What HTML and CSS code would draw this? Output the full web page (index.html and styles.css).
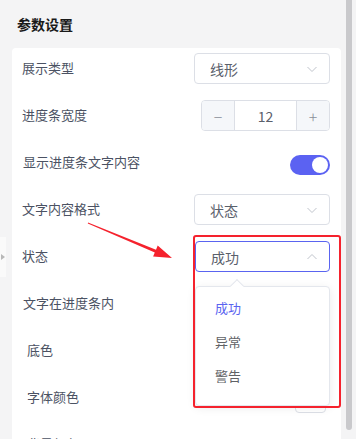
FILE: index.html
```html
<!DOCTYPE html>
<html>
<head>
  <title>参数设置</title>
  <meta charset="utf-8">
  <link rel="stylesheet" href="styles.css">
</head>
<body>
  <div class="page">
    <div class="side-tab"><span class="side-arrow"></span></div>

    <div class="panel">
      <div class="panel-title">参数设置</div>

      <div class="card">
        <div class="form-row">
          <span class="label">展示类型</span>
          <div class="select">
            <span>线形</span>
            <svg class="chevron" width="12" height="12" viewBox="0 0 12 12"><path d="M1.5 4 L6 8.5 L10.5 4" fill="none" stroke="#c0c4cc" stroke-width="1"/></svg>
          </div>
        </div>

        <div class="form-row">
          <span class="label">进度条宽度</span>
          <div class="number-input">
            <span class="step">−</span>
            <span class="value">12</span>
            <span class="step plus">+</span>
          </div>
        </div>

        <div class="form-row">
          <span class="label indent-1">显示进度条文字内容</span>
          <div class="switch"><span class="knob"></span></div>
        </div>

        <div class="form-row">
          <span class="label">文字内容格式</span>
          <div class="select">
            <span>状态</span>
            <svg class="chevron" width="12" height="12" viewBox="0 0 12 12"><path d="M1.5 4 L6 8.5 L10.5 4" fill="none" stroke="#c0c4cc" stroke-width="1"/></svg>
          </div>
        </div>

        <div class="form-row">
          <span class="label">状态</span>
          <div class="select focused">
            <span>成功</span>
            <svg class="chevron" width="12" height="12" viewBox="0 0 12 12"><path d="M1.5 8 L6 3.5 L10.5 8" fill="none" stroke="#c0c4cc" stroke-width="1"/></svg>
          </div>
        </div>

        <div class="form-row">
          <span class="label indent-1">文字在进度条内</span>
        </div>

        <div class="form-row">
          <span class="label indent-2">底色</span>
        </div>

        <div class="form-row">
          <span class="label indent-2">字体颜色</span>
          <div class="color-picker"><span class="swatch"></span></div>
        </div>

        <div class="form-row">
          <span class="label indent-2">背景颜色</span>
        </div>
      </div>
    </div>

    <div class="scroll-track"><div class="scroll-thumb"></div></div>

    <!-- open dropdown of 状态 -->
    <div class="dropdown">
      <span class="dropdown-arrow"></span>
      <div class="option active">成功</div>
      <div class="option">异常</div>
      <div class="option">警告</div>
    </div>

    <!-- annotation -->
    <div class="highlight"></div>
    <svg class="pointer" width="356" height="439" viewBox="0 0 356 439">
      <polygon points="88,222.6 156,249.7 157.7,245.6 172,258 153.1,256.6 154.8,252.5 87.8,223.4" fill="#f5222d"/>
    </svg>
  </div>
</body>
</html>
```

FILE: styles.css
```css
* {
  margin: 0;
  padding: 0;
  box-sizing: border-box;
}

body {
  font-family: "Noto Sans CJK SC", "Noto Sans", sans-serif;
  background: #f4f4f5;
  color: #4b5263;
  width: 356px;
  height: 439px;
  overflow: hidden;
}

.page {
  position: relative;
  display: flex;
  height: 439px;
}

.panel {
  width: 341px;
  padding-left: 12px;
}

.panel-title {
  height: 48px;
  padding-left: 5px;
  display: flex;
  align-items: center;
  font-size: 14px;
  font-weight: 700;
  color: #1a1a1a;
}

.card {
  background: white;
  border-radius: 4px 4px 0 0;
  padding: 5px 11px 0 10px;
  display: flex;
  flex-direction: column;
  gap: 16px;
  height: 500px;
}

.form-row {
  height: 31px;
  display: flex;
  align-items: center;
  justify-content: space-between;
}

.label {
  font-size: 13px;
  color: #4b5263;
  margin-top: -2px;
}

.indent-1 {
  padding-left: 1px;
}

.indent-2 {
  padding-left: 5px;
}

.select {
  width: 136px;
  height: 31px;
  border: 1px solid #dcdfe6;
  border-radius: 4px;
  display: flex;
  align-items: center;
  justify-content: space-between;
  padding: 0 11px 0 15px;
  font-size: 14px;
  color: #5a606b;
}

.select.focused {
  width: 135px;
  border-color: #5a64f0;
}

.number-input {
  width: 129px;
  height: 31px;
  border: 1px solid #dcdfe6;
  border-radius: 4px;
  display: flex;
  overflow: hidden;
  font-size: 14px;
}

.step {
  width: 33px;
  background: #f5f7fa;
  color: #8a8f99;
  display: flex;
  align-items: center;
  justify-content: center;
  font-size: 16px;
  font-weight: 300;
  border-right: 1px solid #dcdfe6;
}

.step.plus {
  border-right: none;
  border-left: 1px solid #dcdfe6;
}

.value {
  flex: 1;
  display: flex;
  align-items: center;
  justify-content: center;
  color: #5a606b;
}

.switch {
  width: 40px;
  height: 20px;
  margin-top: 4px;
  border-radius: 10px;
  background: #5b62f2;
  display: flex;
  align-items: center;
  justify-content: flex-end;
  padding-right: 2px;
}

.knob {
  width: 16px;
  height: 16px;
  border-radius: 50%;
  background: white;
}

.color-picker {
  width: 31px;
  height: 31px;
  margin-right: 4px;
  border: 1px solid #dcdfe6;
  border-radius: 4px;
  padding: 4px;
}

.swatch {
  display: block;
  width: 100%;
  height: 100%;
  border-radius: 2px;
  background: #e02020;
}

.scroll-track {
  width: 15px;
  padding-left: 5px;
}

.scroll-thumb {
  width: 6px;
  height: 430px;
  background: #c9c9cc;
  border-radius: 0 0 3px 3px;
}

.side-tab {
  position: absolute;
  left: 0;
  top: 237px;
  width: 6px;
  height: 40px;
  background: #fafafa;
  display: flex;
  align-items: center;
}

.side-arrow {
  width: 0;
  height: 0;
  border-top: 3px solid transparent;
  border-bottom: 3px solid transparent;
  border-left: 4px solid #b8b8b8;
  margin-left: 1px;
}

.dropdown {
  position: absolute;
  left: 195px;
  top: 286px;
  width: 135px;
  padding: 4px 0 12px;
  background: white;
  border: 1px solid #e4e7ed;
  border-radius: 4px;
  box-shadow: 0 2px 10px rgba(0,0,0,0.08);
  font-size: 13px;
  color: #606266;
}

.dropdown-arrow {
  position: absolute;
  left: 36px;
  top: -6px;
  width: 10px;
  height: 10px;
  background: white;
  border-left: 1px solid #e4e7ed;
  border-top: 1px solid #e4e7ed;
  transform: rotate(45deg);
}

.option {
  height: 34px;
  line-height: 34px;
  padding-left: 19px;
}

.option.active {
  color: #5a64f0;
}

.highlight {
  position: absolute;
  left: 193px;
  top: 235px;
  width: 148px;
  height: 173px;
  border: 2px solid #f5222d;
  border-radius: 3px;
}

.pointer {
  position: absolute;
  left: 0;
  top: 0;
}
```
